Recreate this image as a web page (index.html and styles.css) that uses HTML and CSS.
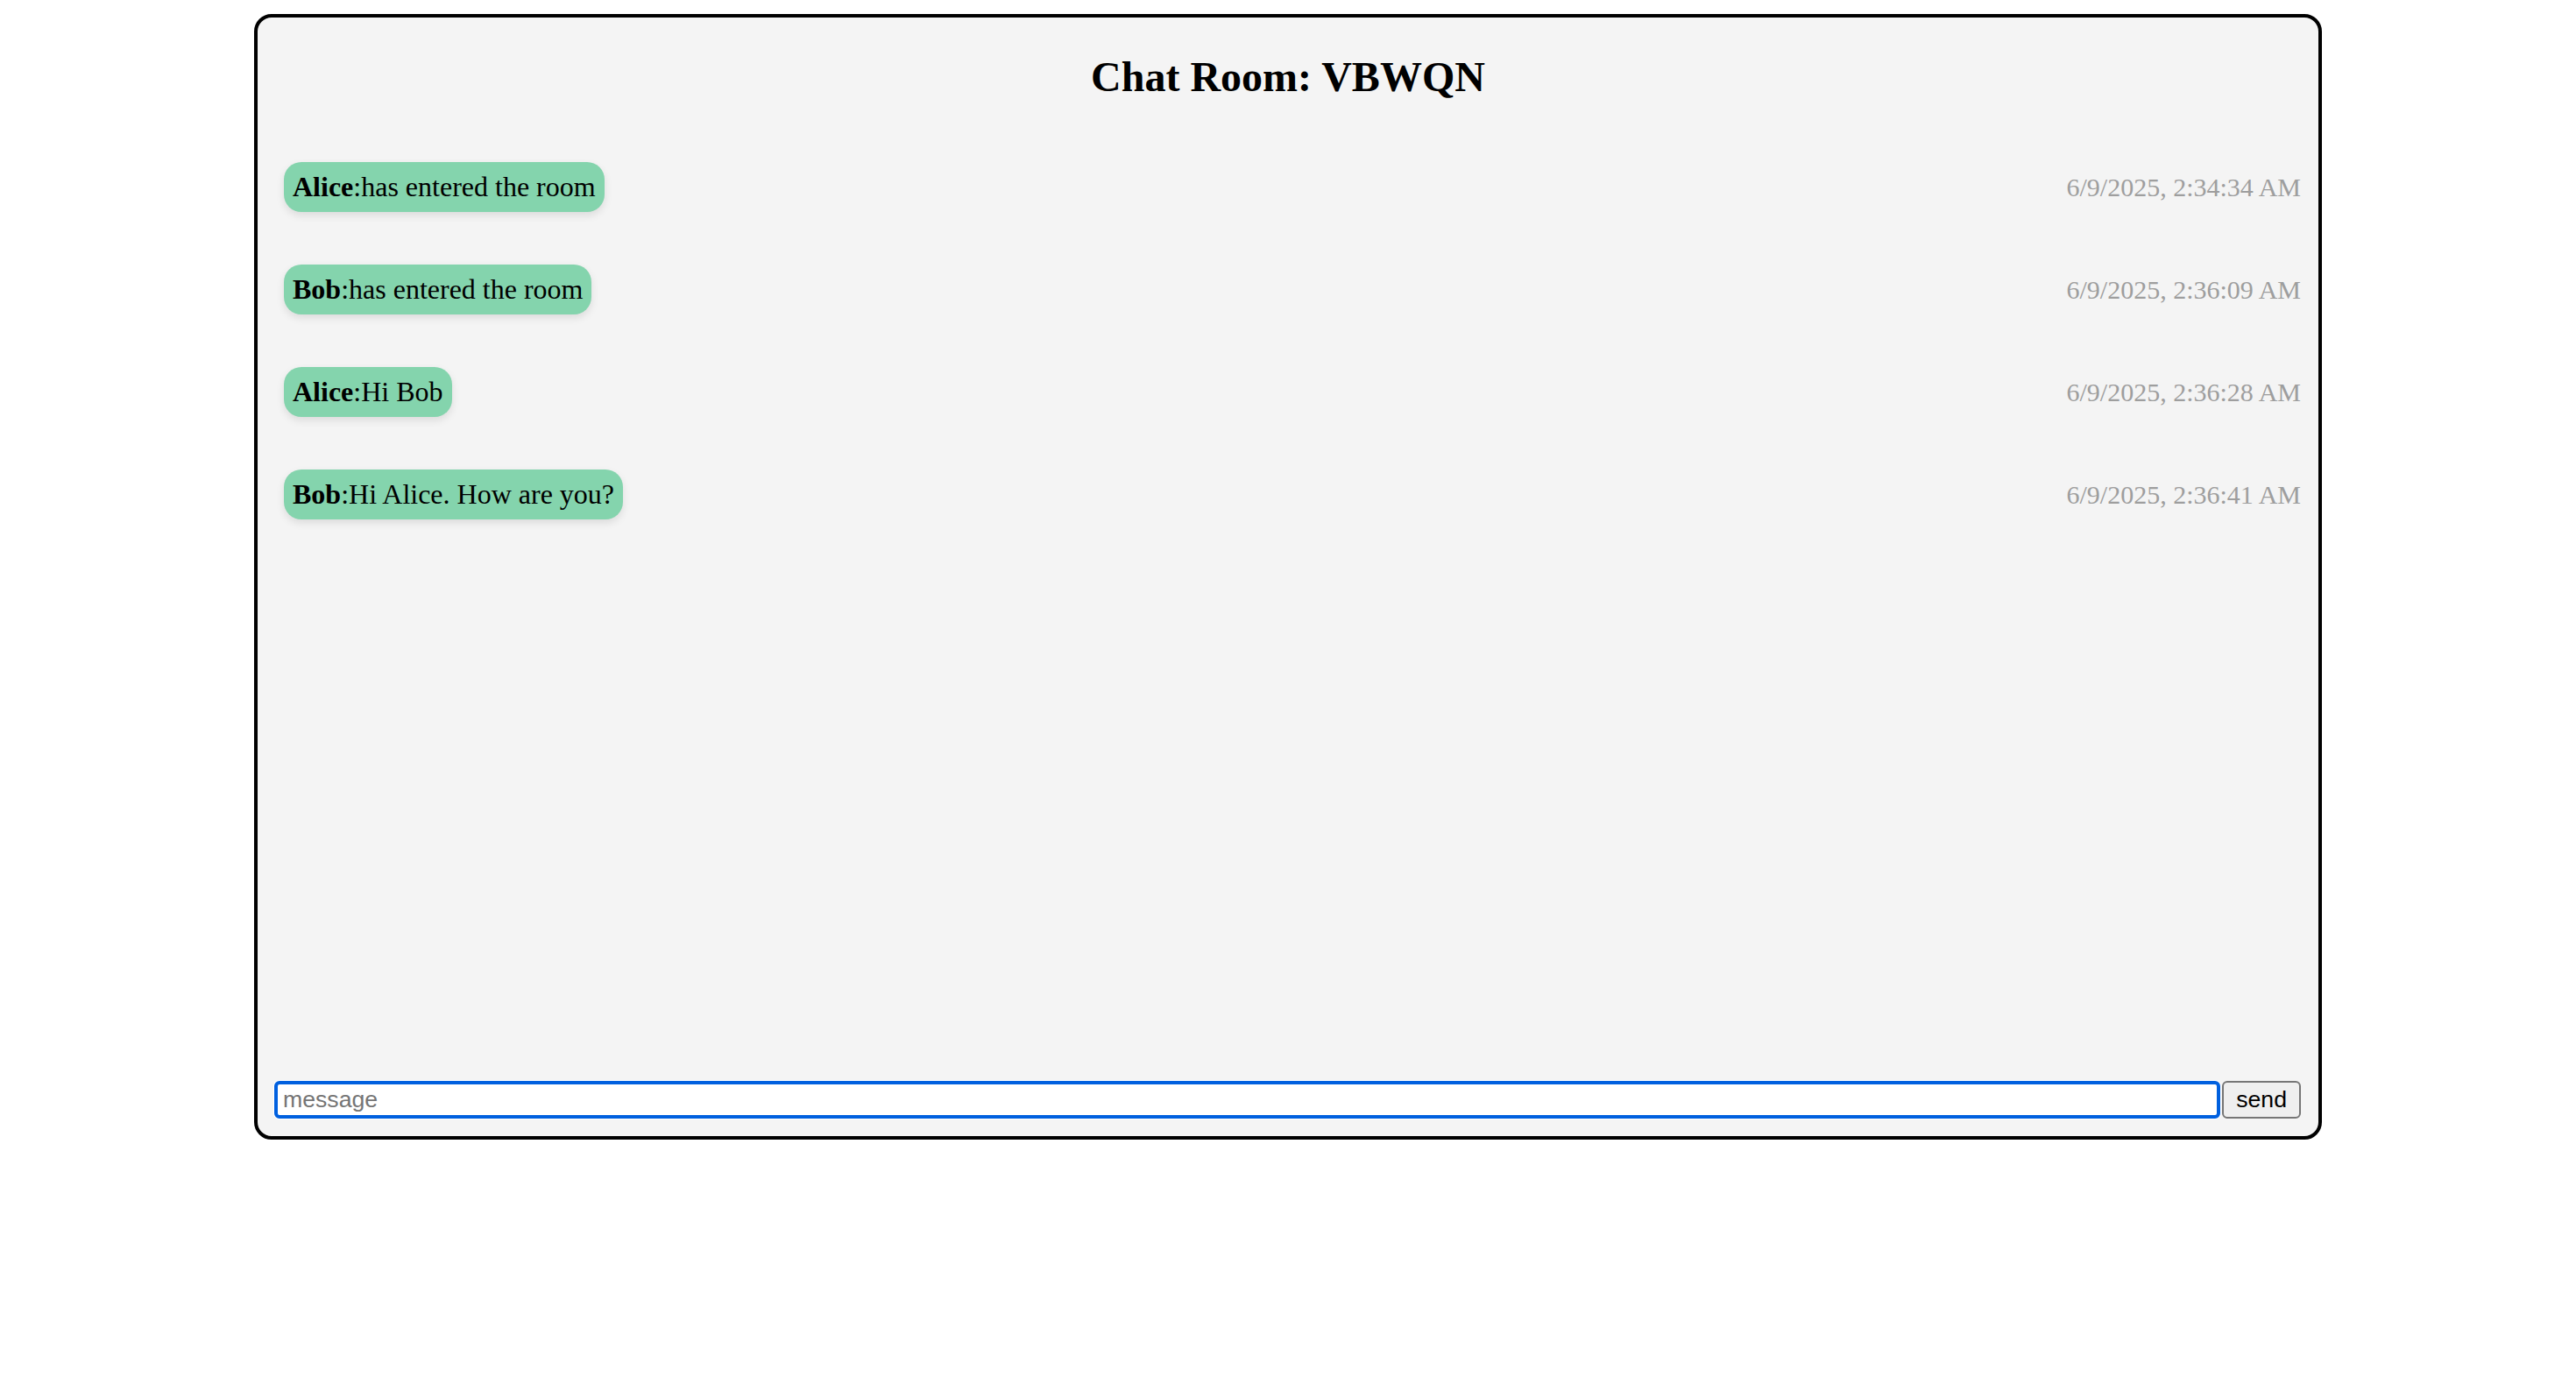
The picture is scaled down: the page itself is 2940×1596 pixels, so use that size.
FILE: index.html
```html
<!DOCTYPE html>
<html lang="en">
<head>
<meta charset="utf-8">
<title>Chat Room: VBWQN</title>
<link rel="stylesheet" href="styles.css">
</head>
<body>
<div class="chat">
  <h2 class="chat-title">Chat Room: VBWQN</h2>
  <div class="messages">
    <div class="message">
      <span class="bubble"><strong>Alice</strong>:has entered the room</span>
      <span class="time">6/9/2025, 2:34:34 AM</span>
    </div>
    <div class="message">
      <span class="bubble"><strong>Bob</strong>:has entered the room</span>
      <span class="time">6/9/2025, 2:36:09 AM</span>
    </div>
    <div class="message">
      <span class="bubble"><strong>Alice</strong>:Hi Bob</span>
      <span class="time">6/9/2025, 2:36:28 AM</span>
    </div>
    <div class="message">
      <span class="bubble"><strong>Bob</strong>:Hi Alice. How are you?</span>
      <span class="time">6/9/2025, 2:36:41 AM</span>
    </div>
  </div>
  <form class="composer" onsubmit="return false">
    <input class="composer-input" type="text" placeholder="message" autofocus>
    <button class="composer-send" type="submit">send</button>
  </form>
</div>
</body>
</html>
```

FILE: styles.css
```css
html, body {
  background: #ffffff;
}

body {
  margin: 16px;
  font-family: "Liberation Serif", "Times New Roman", serif;
  color: #000;
}

.chat {
  width: 80vw;
  height: 80vh;
  margin: 0 auto;
  padding: 0;
  box-sizing: content-box;
  border: 4px solid #000;
  border-radius: 20px;
  background: #f4f4f4;
  display: flex;
  flex-direction: column;
}

.chat-title {
  margin: 40px 20px;
  font-size: 48px;
  font-weight: bold;
  text-align: center;
  line-height: normal;
}

.messages {
  flex: 1;
  overflow: auto;
  padding: 0 20px;
}

.message {
  display: flex;
  justify-content: space-between;
  align-items: center;
  padding: 30px 0 30px 10px;
}

.bubble {
  background: #84d4ad;
  border-radius: 20px;
  padding: 10px;
  font-size: 32px;
  line-height: normal;
  box-shadow: 0 4px 10px rgba(0, 0, 0, 0.1);
}

.time {
  font-size: 30px;
  color: #9e9e9e;
}

.composer {
  display: flex;
  gap: 2px;
  margin: 0 20px 20px 19px;
}

.composer-input {
  flex: 1;
  font-family: "Liberation Sans", Arial, sans-serif;
  font-size: 26.67px;
  padding: 2px 4px 2px 6px;
  border: 4px solid #0060df;
  border-radius: 6px;
  background: #fff;
  box-shadow: 0 0 0 1px #fff;
  outline: none;
  height: 43px;
  box-sizing: border-box;
  color: #000;
  caret-color: #000;
}

.composer-input::placeholder {
  color: #757575;
}

.composer-send {
  font-family: "Liberation Sans", Arial, sans-serif;
  font-size: 26.67px;
  padding: 2px 14px;
  height: 43px;
  box-sizing: border-box;
  border: 2px solid #767676;
  border-radius: 6px;
  background: #efefef;
  color: #000;
}
```
